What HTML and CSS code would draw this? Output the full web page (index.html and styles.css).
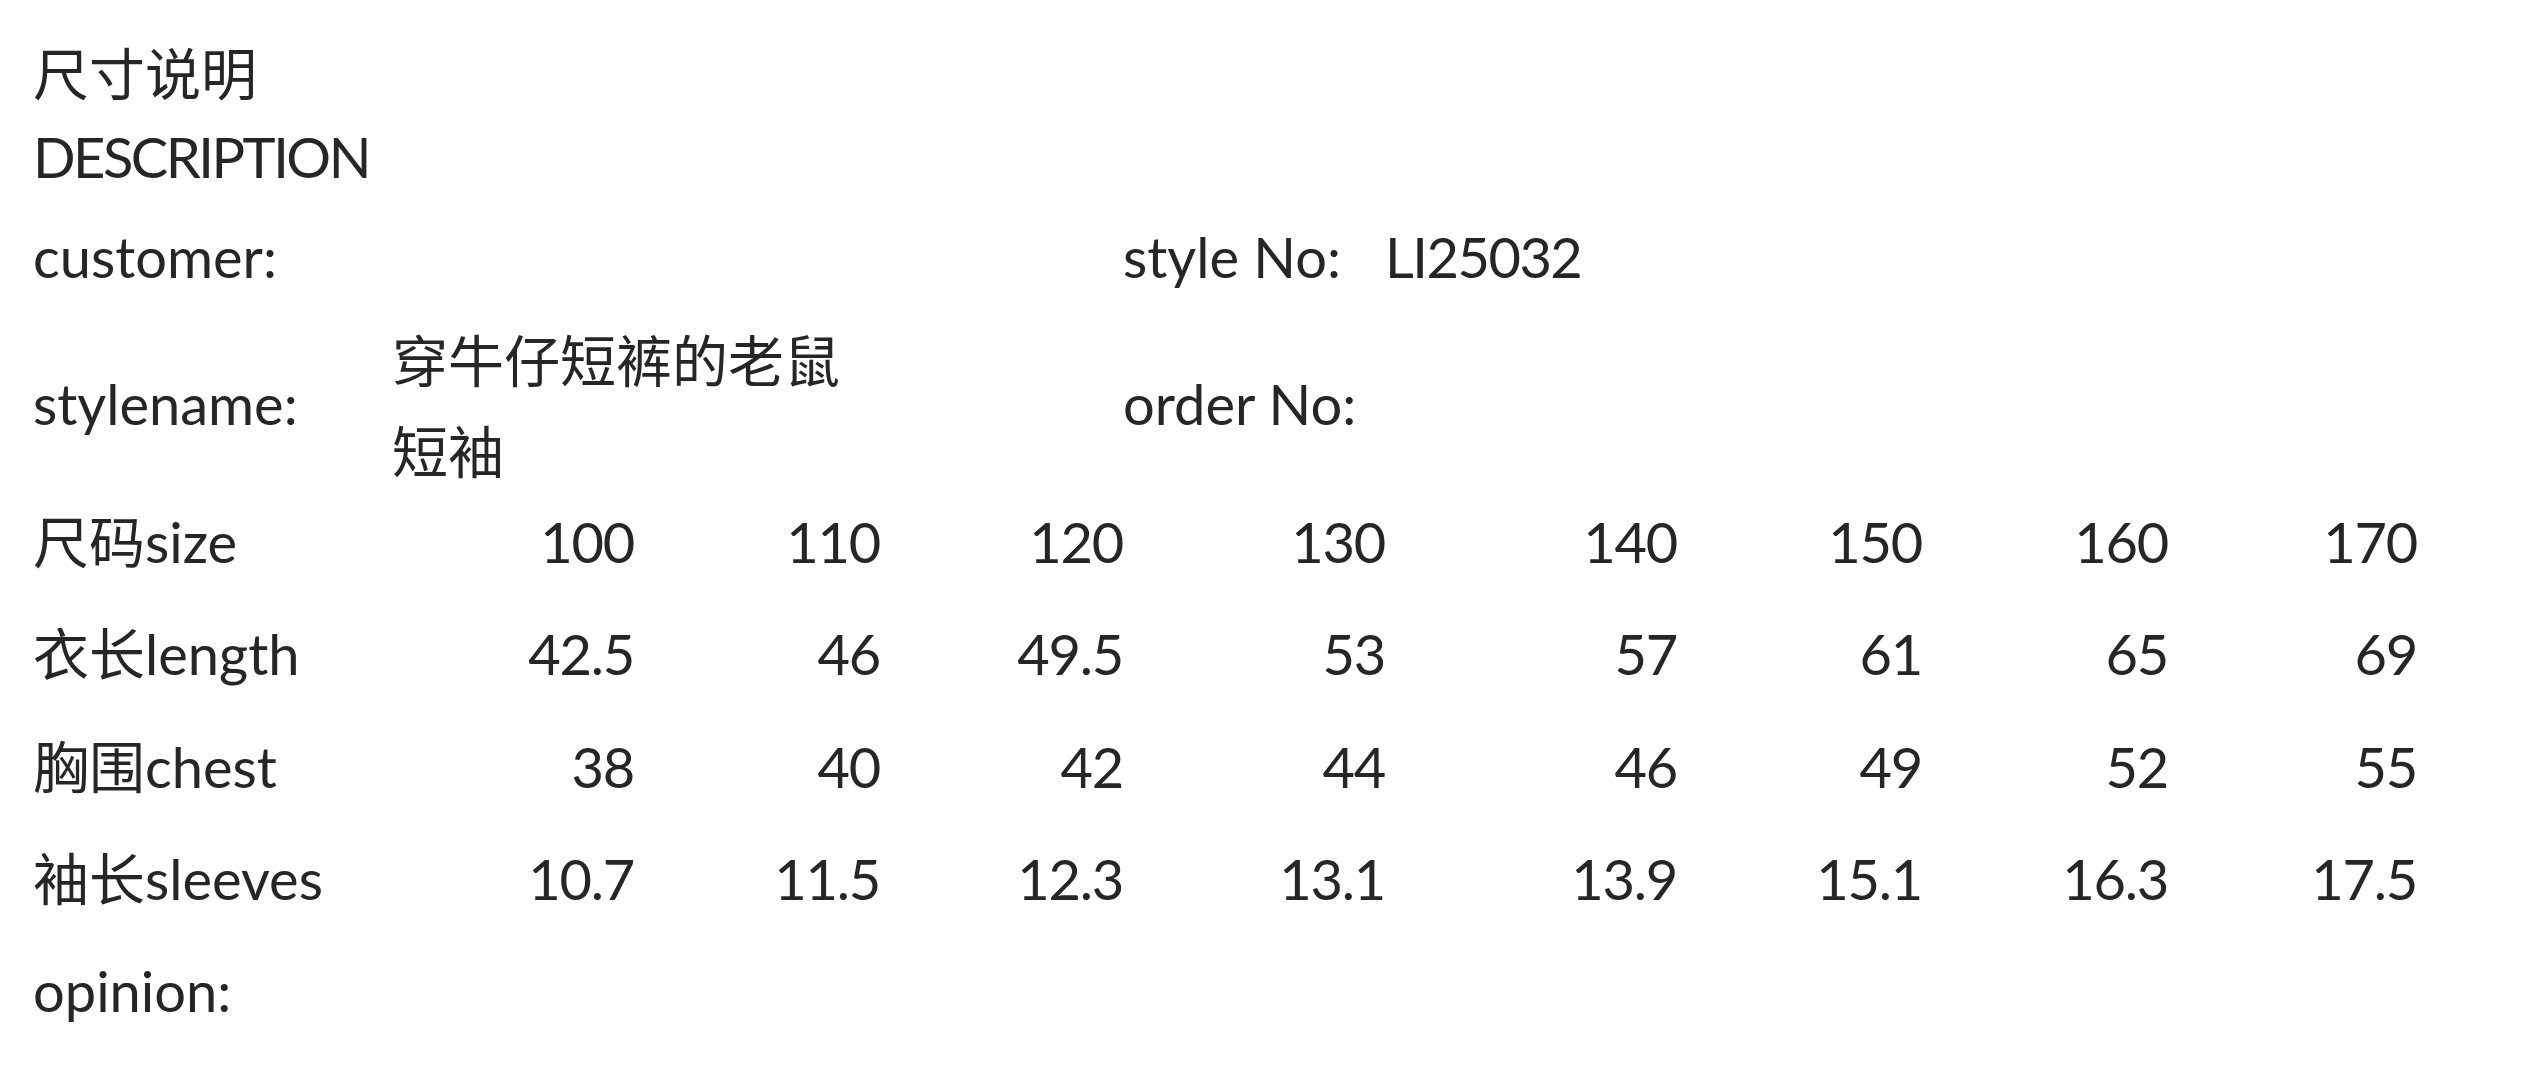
FILE: index.html
```html
<!DOCTYPE html>
<html lang="zh-CN">
<head>
<meta charset="utf-8">
<title>尺寸说明</title>
<link rel="stylesheet" href="styles.css">
</head>
<body>
<div class="sheet">
  <div class="row row-title">
    <div class="cell cjk">尺寸说明</div>
  </div>
  <div class="row row-desc">
    <div class="cell caps">DESCRIPTION</div>
  </div>
  <div class="row row-cust">
    <div class="cell">customer:</div>
    <div class="cell"></div>
    <div class="cell"></div>
    <div class="cell"></div>
    <div class="cell">style No:</div>
    <div class="cell code">LI25032</div>
  </div>
  <div class="row row-name">
    <div class="cell">stylename:</div>
    <div class="cell span2 cjk wrap"><span class="name">穿牛仔短裤的老鼠短袖</span></div>
    <div class="cell"></div>
    <div class="cell">order No:</div>
  </div>
  <div class="row row-size">
    <div class="cell">尺码size</div>
    <div class="cell num">100</div>
    <div class="cell num">110</div>
    <div class="cell num">120</div>
    <div class="cell num">130</div>
    <div class="cell num">140</div>
    <div class="cell num">150</div>
    <div class="cell num">160</div>
    <div class="cell num">170</div>
  </div>
  <div class="row row-len">
    <div class="cell">衣长length</div>
    <div class="cell num">42.5</div>
    <div class="cell num">46</div>
    <div class="cell num">49.5</div>
    <div class="cell num">53</div>
    <div class="cell num">57</div>
    <div class="cell num">61</div>
    <div class="cell num">65</div>
    <div class="cell num">69</div>
  </div>
  <div class="row row-std">
    <div class="cell">胸围chest</div>
    <div class="cell num">38</div>
    <div class="cell num">40</div>
    <div class="cell num">42</div>
    <div class="cell num">44</div>
    <div class="cell num">46</div>
    <div class="cell num">49</div>
    <div class="cell num">52</div>
    <div class="cell num">55</div>
  </div>
  <div class="row row-std">
    <div class="cell">袖长sleeves</div>
    <div class="cell num">10.7</div>
    <div class="cell num">11.5</div>
    <div class="cell num">12.3</div>
    <div class="cell num">13.1</div>
    <div class="cell num">13.9</div>
    <div class="cell num">15.1</div>
    <div class="cell num">16.3</div>
    <div class="cell num">17.5</div>
  </div>
  <div class="row row-std">
    <div class="cell">opinion:</div>
  </div>
</div>
</body>
</html>
```

FILE: styles.css
```css
html, body {
  margin: 0;
  padding: 0;
  background: #ffffff;
}

.sheet {
  padding: 28px 0 0 33px;
  font-family: Lato, "Noto Sans CJK SC", sans-serif;
  font-size: 56px;
  line-height: 73px;
  color: #262626;
}

.row {
  display: grid;
  grid-template-columns: 359px 242px 246px 243px 262px 292px 245px 246px 249px;
  align-items: stretch;
}

.row-title { height: 84px; }
.row-desc  { height: 88px; }
.row-cust  { height: 112px; }
.row-name  { height: 174px; }
.row-size  { height: 110px; }
.row-len   { height: 114px; }
.row-std   { height: 112px; }

.cell {
  display: flex;
  align-items: center;
  justify-content: flex-start;
  white-space: nowrap;
  min-width: 0;
}

.cell.num {
  justify-content: flex-end;
  letter-spacing: -1.2px;
}

.cell.caps {
  letter-spacing: -2.5px;
}

.cell.code {
  letter-spacing: -1.5px;
}

.cell.cjk {
  font-family: "Noto Sans CJK SC", sans-serif;
}

.cell.span2 {
  grid-column: span 2;
}

.cell.wrap {
  white-space: normal;
}

.name {
  line-height: 91px;
}
```
